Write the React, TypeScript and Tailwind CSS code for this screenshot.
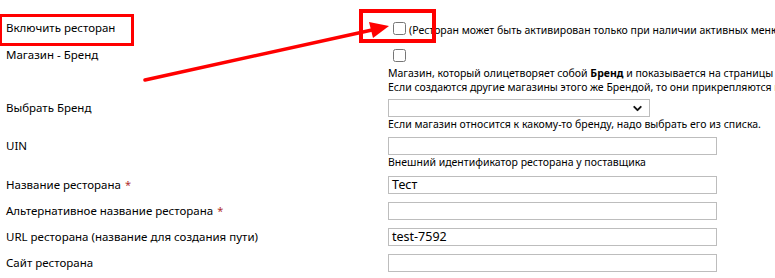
import { ChevronDown } from 'lucide-react'

const font = { fontFamily: '"Noto Sans", "DejaVu Sans", sans-serif' }

function Label({ children, req }: { children: React.ReactNode; req?: boolean }) {
  return (
    <div className="w-[388px] shrink-0 pl-[6px] h-[18px] leading-[18px] text-[11.5px] text-black">
      {children}
      {req && <span className="text-[#b03030] ml-[4px] text-[11px]">*</span>}
    </div>
  )
}

function TextBox({ value }: { value?: string }) {
  return (
    <div className="w-[329px] h-[18px] border border-[#bdbdbd] bg-white pl-[3px] leading-[16px] text-[12.5px] text-black">
      {value}
    </div>
  )
}

function Note({ children }: { children: React.ReactNode }) {
  return <div className="h-[14px] leading-[14px] text-[10.5px] text-black whitespace-nowrap">{children}</div>
}

export default function App() {
  return (
    <div className="relative w-[775px] h-[278px] overflow-hidden bg-white" style={font}>
      <div className="flex flex-col">
        {/* включить */}
        <div className="flex mt-[19px]">
          <Label>Включить ресторан</Label>
          <div className="flex items-center h-[18px] whitespace-nowrap">
            <input type="checkbox" className="w-[13px] h-[13px] m-0 ml-[5px]" />
            <span className="ml-[3px] text-[10.5px] text-black mt-[5px]">(Ресторан может быть активирован только при наличии активных меню)</span>
          </div>
        </div>

        {/* бренд */}
        <div className="flex mt-[9px]">
          <Label>Магазин - Бренд</Label>
          <div className="flex flex-col">
            <div className="flex items-center h-[18px]">
              <input type="checkbox" className="w-[13px] h-[13px] m-0 ml-[5px]" />
            </div>
            <div className="mt-[2px]">
              <Note>Магазин, который олицетворяет собой <b>Бренд</b> и показывается на страницы всех магазинов</Note>
              <Note>Если создаются другие магазины этого же Брендой, то они прикрепляются к нему</Note>
            </div>
          </div>
        </div>

        {/* выбрать бренд */}
        <div className="flex mt-[5px]">
          <Label>Выбрать Бренд</Label>
          <div className="flex flex-col">
            <div className="w-[262px] h-[18px] border border-[#bdbdbd] bg-white flex items-center justify-end pr-[5px]">
              <ChevronDown size={13} strokeWidth={3.5} color="#111" />
            </div>
            <Note>Если магазин относится к какому-то бренду, надо выбрать его из списка.</Note>
          </div>
        </div>

        {/* UIN */}
        <div className="flex mt-[6px]">
          <Label>UIN</Label>
          <div className="flex flex-col">
            <TextBox />
            <Note>Внешний идентификатор ресторана у поставщика</Note>
          </div>
        </div>

        <div className="flex mt-[7px]">
          <Label req>Название ресторана</Label>
          <TextBox value="Тест" />
        </div>

        <div className="flex mt-[8px]">
          <Label req>Альтернативное название ресторана</Label>
          <TextBox />
        </div>

        <div className="flex mt-[8px]">
          <Label>URL ресторана (название для создания пути)</Label>
          <TextBox value="test-7592" />
        </div>

        <div className="flex mt-[8px]">
          <Label>Сайт ресторана</Label>
          <TextBox />
        </div>
      </div>

      {/* annotations */}
      <div className="absolute left-[-1px] top-[14px] w-[135px] h-[32px] border-[3px] border-[#ff0000]" />
      <div className="absolute left-[359px] top-[9px] w-[77px] h-[34px] border-[4px] border-[#ff0000]" />
      <svg className="absolute left-0 top-0 pointer-events-none" width="775" height="278">
        <line x1="145" y1="80" x2="372" y2="30" stroke="#ff0000" strokeWidth="3.5" strokeLinecap="round" />
        <polygon points="389,26 369,22 373,38" fill="#ff0000" />
      </svg>
    </div>
  )
}
